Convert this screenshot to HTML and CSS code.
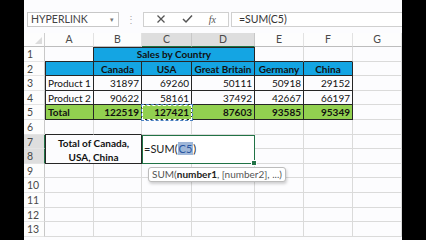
FILE: index.html
```html
<!DOCTYPE html>
<html lang="en">
<head>
    <meta charset="UTF-8">
    <title>Sales by Country</title>
    <link rel="stylesheet" href="styles.css">
</head>
<body>
    <div class="screen">
        <div class="formula-bar">
            <div class="name-box">HYPERLINK<span class="caret">&#9662;</span></div>
            <div class="grip">&#8942;</div>
            <div class="fx-box">
                <svg class="ico" width="10" height="10" viewBox="0 0 10 10"><path d="M1.5 1.5 L8.5 8.5 M8.5 1.5 L1.5 8.5" stroke="#555" stroke-width="1.3" fill="none"/></svg>
                <svg class="ico" width="11" height="10" viewBox="0 0 11 10"><path d="M1 5 L4 8 L10 1.5" stroke="#555" stroke-width="1.5" fill="none"/></svg>
                <span class="fx">fx</span>
            </div>
            <div class="formula-input">=SUM(C5)</div>
        </div>

        <div class="sheet">
            <div class="corner"></div>
            <div class="ch">A</div>
            <div class="ch">B</div>
            <div class="ch sel">C</div>
            <div class="ch sel">D</div>
            <div class="ch">E</div>
            <div class="ch">F</div>
            <div class="ch">G</div>

            <div class="rh">1</div>
            <div class="c bb br"></div>
            <div class="c t blue bold center top span3">Sales by Country</div>
            <div class="c bb"></div>
            <div class="c bb"></div>
            <div class="c"></div>

            <div class="rh">2</div>
            <div class="c t blue left-edge"></div>
            <div class="c t blue bold center">Canada</div>
            <div class="c t blue bold center">USA</div>
            <div class="c t blue bold center">Great Britain</div>
            <div class="c t blue bold center">Germany</div>
            <div class="c t blue bold center">China</div>
            <div class="c"></div>

            <div class="rh">3</div>
            <div class="c t left-edge">Product 1</div>
            <div class="c t num">31897</div>
            <div class="c t num">69260</div>
            <div class="c t num">50111</div>
            <div class="c t num">50918</div>
            <div class="c t num">29152</div>
            <div class="c"></div>

            <div class="rh">4</div>
            <div class="c t left-edge">Product 2</div>
            <div class="c t num">90622</div>
            <div class="c t num">58161</div>
            <div class="c t num">37492</div>
            <div class="c t num">42667</div>
            <div class="c t num">66197</div>
            <div class="c"></div>

            <div class="rh">5</div>
            <div class="c t green bold left-edge">Total</div>
            <div class="c t green bold num">122519</div>
            <div class="c t green bold num copy">127421<span class="ants"></span></div>
            <div class="c t green bold num">87603</div>
            <div class="c t green bold num">93585</div>
            <div class="c t green bold num">95349</div>
            <div class="c"></div>

            <div class="rh">6</div>
            <div class="c bb"></div>
            <div class="c bb"></div>
            <div class="c"></div>
            <div class="c"></div>
            <div class="c"></div>
            <div class="c"></div>
            <div class="c"></div>

            <div class="rh sel">7</div>
            <div class="c t left-edge bold center label span2x2">Total of Canada,<br>USA, China</div>
            <div class="c edit span2x2">
                <span>=SUM(<span class="ref">C5</span>)</span>
                <span class="handle"></span>
                <div class="tip">SUM(<b>number1</b>, [number2], ...)</div>
            </div>
            <div class="c"></div>
            <div class="c"></div>
            <div class="c"></div>

            <div class="rh sel">8</div>
            <div class="c"></div>
            <div class="c"></div>
            <div class="c"></div>

            <div class="rh">9</div>
            <div class="c"></div><div class="c"></div><div class="c"></div><div class="c"></div><div class="c"></div><div class="c"></div><div class="c"></div>
            <div class="rh">10</div>
            <div class="c"></div><div class="c"></div><div class="c"></div><div class="c"></div><div class="c"></div><div class="c"></div><div class="c"></div>
            <div class="rh">11</div>
            <div class="c"></div><div class="c"></div><div class="c"></div><div class="c"></div><div class="c"></div><div class="c"></div><div class="c"></div>
            <div class="rh">12</div>
            <div class="c"></div><div class="c"></div><div class="c"></div><div class="c"></div><div class="c"></div><div class="c"></div><div class="c"></div>
            <div class="rh">13</div>
            <div class="c"></div><div class="c"></div><div class="c"></div><div class="c"></div><div class="c"></div><div class="c"></div><div class="c"></div>
        </div>
    </div>
</body>
</html>
```

FILE: styles.css
```css
:root {
    --grid-line: #dadada;
    --table-line: #262626;
    --blue: #14a5e3;
    --green: #92d050;
    --header-text: #4a4a4a;
    --excel-green: #217346;
}

body {
    margin: 0;
    background-color: #000;
    font-family: Lato, 'Liberation Sans', Arial, sans-serif;
    overflow: hidden;
}

.screen {
    width: 378px;
    height: 240px;
    margin-left: 24px;
    background-color: #fcfcfe;
    overflow: hidden;
}

.formula-bar {
    display: flex;
    align-items: center;
    height: 33px;
    padding: 5px 0 0 3px;
    box-sizing: border-box;
}

.name-box {
    position: relative;
    width: 92px;
    height: 15px;
    box-sizing: border-box;
    border: 1px solid #c8c8c8;
    background-color: #fff;
    font-size: 10.5px;
    color: #444;
    line-height: 13px;
    padding-left: 3px;
}

.caret {
    position: absolute;
    right: 4px;
    top: 0;
    font-size: 7px;
    color: #777;
}

.grip {
    width: 24px;
    text-align: center;
    color: #aaa;
    font-size: 10px;
}

.fx-box {
    display: flex;
    align-items: center;
    justify-content: space-around;
    width: 86px;
    height: 15px;
    box-sizing: border-box;
    border: 1px solid #d0d0d0;
    background-color: #fff;
    padding: 0 4px;
}

.fx {
    font-family: 'Liberation Serif', serif;
    font-style: italic;
    font-size: 10px;
    color: #555;
}

.formula-input {
    flex: 1;
    height: 15px;
    box-sizing: border-box;
    margin-left: 2px;
    border: 1px solid #d0d0d0;
    border-right: none;
    background-color: #fff;
    font-size: 10.5px;
    color: #333;
    line-height: 13px;
    padding-left: 7px;
}

.sheet {
    display: grid;
    grid-template-columns: 21px 49px 48px 50px 63px 49px 49px 49px;
    grid-template-rows: 14px repeat(13, 14.6px);
    font-size: 10px;
    color: #111;
}

.corner,
.ch,
.rh {
    background-color: #fdfdfd;
    color: var(--header-text);
    font-size: 10.5px;
    box-sizing: border-box;
}

.corner {
    border-right: 1px solid #cfcfcf;
    border-bottom: 1px solid #bdbdbd;
    position: relative;
}

.corner::after {
    content: "";
    position: absolute;
    right: 2px;
    bottom: 2px;
    border-left: 7px solid transparent;
    border-bottom: 7px solid #dcdcdc;
}

.ch {
    text-align: center;
    line-height: 13px;
    border-right: 1px solid #e2e2e2;
    border-bottom: 1px solid #bdbdbd;
}

.ch.sel {
    background-color: #dedede;
    border-right-color: #c8c8c8;
    border-bottom: 1px solid var(--excel-green);
}

.rh {
    padding-left: 3px;
    line-height: 14px;
    border-right: 1px solid #c8c8c8;
    border-bottom: 1px solid #e4e4e4;
}

.rh.sel {
    background-color: #dedede;
    border-right: 1px solid var(--excel-green);
}

.c {
    box-sizing: border-box;
    border-right: 1px solid var(--grid-line);
    border-bottom: 1px solid var(--grid-line);
    padding: 0 2px;
    line-height: 14px;
    white-space: nowrap;
    overflow: hidden;
}

.c.t {
    border-right-color: var(--table-line);
    border-bottom-color: var(--table-line);
}

.bb {
    border-bottom-color: var(--table-line);
}

.br {
    border-right-color: var(--table-line);
}

.left-edge {
    box-shadow: inset 1px 0 0 var(--table-line);
    padding-left: 3px;
}

.top {
    box-shadow: inset 0 1px 0 var(--table-line);
}

.blue {
    background-color: var(--blue);
}

.green {
    background-color: var(--green);
}

.bold {
    font-weight: bold;
}

.center {
    text-align: center;
}

.num {
    text-align: right;
}

.span3 {
    grid-column: span 3;
}

.span2x2 {
    grid-column: span 2;
    grid-row: span 2;
}

.label {
    white-space: normal;
    line-height: 14px;
    padding-top: 1px;
}

.copy {
    position: relative;
    overflow: visible;
}

.ants {
    position: absolute;
    left: -1px;
    top: -1px;
    right: -2px;
    bottom: -2px;
    border: 1px dashed #4a7fc0;
    outline: 1px dashed #ffffff;
    outline-offset: -2px;
}

.edit {
    position: relative;
    overflow: visible;
    display: flex;
    align-items: center;
    padding-left: 1px;
    border: 1px solid var(--excel-green);
    background-color: #fff;
    font-size: 11px;
    color: #222;
    z-index: 2;
}

.ref {
    background-color: #9fb7d8;
    color: #2a56a0;
    padding: 0 1px;
}

.handle {
    position: absolute;
    right: -3px;
    bottom: -3px;
    width: 4px;
    height: 4px;
    background-color: var(--excel-green);
    border: 1px solid #fff;
}

.tip {
    position: absolute;
    left: 5px;
    top: 31px;
    height: 13px;
    padding: 0 3px;
    border: 1px solid #bcbcbc;
    border-radius: 3px;
    background-color: #fff;
    box-shadow: 1px 2px 3px rgba(0, 0, 0, 0.18);
    font-size: 10px;
    line-height: 13px;
    color: #555;
    white-space: nowrap;
}

.tip b {
    color: #222;
}
```
